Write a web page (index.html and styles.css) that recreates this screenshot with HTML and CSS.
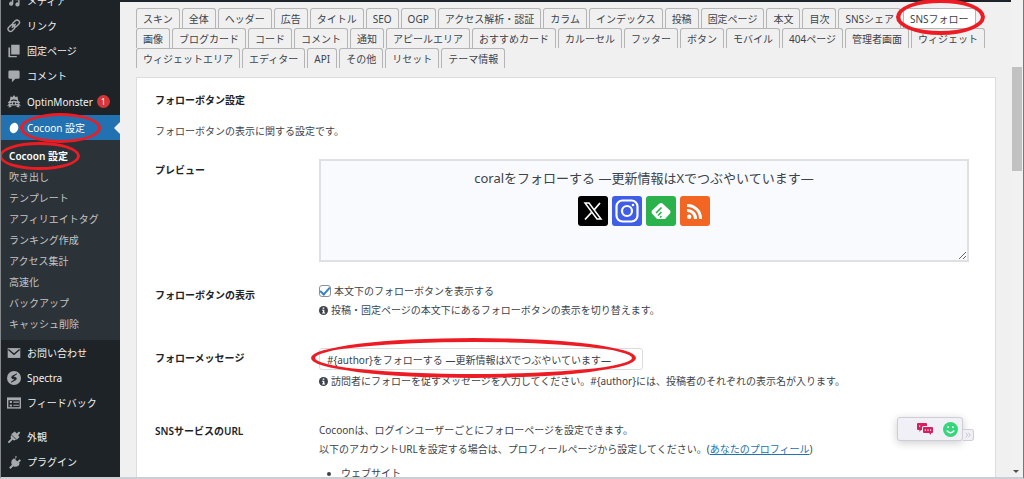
FILE: index.html
```html
<!DOCTYPE html>
<html lang="ja">
<head>
<meta charset="utf-8">
<meta name="viewport" content="width=device-width, initial-scale=1">
<title>Cocoon 設定</title>
<link rel="stylesheet" href="styles.css">
</head>
<body>
<div class="app">
  <nav class="sidebar" aria-label="メインメニュー">
    <ul class="menu">
      <li><a class="item item-first" href="#"><svg class="icon" viewBox="0 0 20 20"><path d="M4 3h5v11a3 3 0 1 1-2-3V6H4zM12 6h6v9a3 3 0 1 1-2-3V9h-4z"/></svg>メディア</a></li>
      <li><a class="item" href="#"><svg class="icon line" viewBox="0 0 20 20"><g transform="rotate(-45 10 10)"><rect x="0" y="6" width="11" height="7" rx="3.5"/><rect x="9" y="6" width="11" height="7" rx="3.5"/><path d="M6 9.5h8"/></g></svg>リンク</a></li>
      <li><a class="item" href="#"><svg class="icon" viewBox="0 0 20 20"><path d="M6 1h12v14H6zM2 5h2.500v12H14v2H2z"/></svg>固定ページ</a></li>
      <li><a class="item" href="#"><svg class="icon" viewBox="0 0 20 20"><path d="M4 2h12a2 2 0 0 1 2 2v8a2 2 0 0 1-2 2h-4l-5 5v-5H4a2 2 0 0 1-2-2V4a2 2 0 0 1 2-2z"/></svg>コメント</a></li>
      <li><a class="item item-count" href="#"><svg class="icon" viewBox="0 0 20 20"><path d="m10 0 2 3 3-1 1 6 3 3-2 1 3 4-3-1 1 3-4-1H6l-4 1 1-3-3 1 3-4-2-1 3-3 1-6 3 1z"/><path fill="#1d2327" d="M5 8c3-2 7-2 10 0l-1 1c-2-1-6-1-8 0zM3 12l4-1v2zM17 12l-4-1v2zM5 15h10l-2 2H7z"/><circle cx="10" cy="12" r="1.500" fill="#1d2327"/></svg>OptinMonster<span class="count">1</span></a></li>
      <li><a class="item current" href="#"><svg class="icon" viewBox="0 0 20 20"><ellipse cx="10" cy="10" rx="6" ry="7.500" transform="rotate(20 10 10)"/></svg><span class="marked">Cocoon 設定<i class="ring ring-menu"></i></span></a>
        <ul class="submenu">
          <li><a class="selected marked" href="#">Cocoon 設定<i class="ring ring-sub"></i></a></li>
          <li><a href="#">吹き出し</a></li>
          <li><a href="#">テンプレート</a></li>
          <li><a href="#">アフィリエイトタグ</a></li>
          <li><a href="#">ランキング作成</a></li>
          <li><a href="#">アクセス集計</a></li>
          <li><a href="#">高速化</a></li>
          <li><a href="#">バックアップ</a></li>
          <li><a href="#">キャッシュ削除</a></li>
        </ul></li>
      <li><a class="item" href="#"><svg class="icon" viewBox="0 0 20 20"><path d="M1 3h18v14H1z"/><path d="m2 5 8 7 8-7" fill="none" stroke="#1d2327" stroke-width="2"/></svg>お問い合わせ</a></li>
      <li><a class="item" href="#"><svg class="icon" viewBox="0 0 20 20"><circle cx="10" cy="10" r="10"/><path d="M14 4 8 7c-3 2-1 4 1 4l2 1-5 4 6-3c3-2 1-4-1-4L9 8z" fill="#1d2327" stroke="#1d2327"/></svg>Spectra</a></li>
      <li><a class="item" href="#"><svg class="icon" viewBox="0 0 20 20"><path d="M0 2h20v16H0z"/><path fill="#1d2327" d="M2 6h16v10H2z"/><path d="M4 7h3v3H4zM4 12h3v3H4zM9 8h8v1.500H9zM9 12.500h8V14H9z"/></svg>フィードバック</a></li>
      <li class="apart"><a class="item" href="#"><svg class="icon" viewBox="0 0 20 20"><path d="m11 2 3 3 3-3 2 2-3 4 2 2-4 4-8-8zM6 7l7 7-3 1-2-1-5 5-2-2 5-5-1-2z"/></svg>外観</a></li>
      <li><a class="item" href="#"><svg class="icon" viewBox="0 0 20 20"><path d="m12 1 2 1-2 5 3 2 3-3 2 2-3 3 1 1c-1 4-5 6-9 4l-4 4-2-2 4-4c-2-4 0-8 3-9l2 1z"/></svg>プラグイン</a></li>
    </ul>
  </nav>

  <main class="content">
    <div class="tabs">
      <button class="tab">スキン</button><button class="tab">全体</button><button class="tab">ヘッダー</button><button class="tab">広告</button><button class="tab">タイトル</button><button class="tab">SEO</button><button class="tab">OGP</button><button class="tab">アクセス解析・認証</button><button class="tab">カラム</button><button class="tab">インデックス</button><button class="tab">投稿</button><button class="tab">固定ページ</button><button class="tab">本文</button><button class="tab">目次</button><button class="tab">SNSシェア</button><button class="tab active marked">SNSフォロー<i class="ring ring-tab"></i></button>
      <button class="tab">画像</button><button class="tab">ブログカード</button><button class="tab">コード</button><button class="tab">コメント</button><button class="tab">通知</button><button class="tab">アピールエリア</button><button class="tab">おすすめカード</button><button class="tab">カルーセル</button><button class="tab">フッター</button><button class="tab">ボタン</button><button class="tab">モバイル</button><button class="tab">404ページ</button><button class="tab">管理者画面</button><button class="tab">ウィジェット</button>
      <button class="tab">ウィジェットエリア</button><button class="tab">エディター</button><button class="tab">API</button><button class="tab">その他</button><button class="tab">リセット</button><button class="tab">テーマ情報</button>
    </div>

    <section class="panel">
      <h2>フォローボタン設定</h2>
      <p class="lead">フォローボタンの表示に関する設定です。</p>

      <div class="row row-preview">
        <h3>プレビュー</h3>
        <div class="preview">
          <p class="message">coralをフォローする —更新情報はXでつぶやいています—</p>
          <div class="socials">
            <a class="social x" href="#" aria-label="X"><svg viewBox="0 0 30 30"><path d="M7 7h4l12 16h-4z" fill="none" stroke="#fff" stroke-width="1.500"/><path d="m22 7-6 7M13.500 16.500 7 23.500" stroke="#fff" stroke-width="1.800"/></svg></a>
            <a class="social instagram" href="#" aria-label="Instagram"><svg viewBox="0 0 30 30" fill="none" stroke="#fff" stroke-width="2.200"><rect x="4.500" y="4.500" width="21" height="21" rx="6"/><circle cx="15" cy="15" r="5"/><circle cx="21" cy="9" r="1.300" fill="#fff" stroke="none"/></svg></a>
            <a class="social feedly" href="#" aria-label="feedly"><svg viewBox="0 0 30 30"><path d="M13.500 7.500q1.500-1 3 0l7.500 7q1 1.500 0 3L19 23h-8l-5-5.500q-1-1.500 0-3z" fill="#fff"/><path d="m10 17 5.500-5.500M12 19.500l3.500-3.500M14 21.500l1.500-1.500" stroke="#2bb24c" stroke-width="1.600"/></svg></a>
            <a class="social rss" href="#" aria-label="RSS"><svg viewBox="0 0 30 30" fill="none" stroke="#fff" stroke-width="3"><path d="M7 9.500A13 13 0 0 1 20.500 23M7 14.500A8 8 0 0 1 15.500 23"/><circle cx="9.200" cy="20.800" r="2.200" fill="#fff" stroke="none"/></svg></a>
          </div>
        </div>
      </div>

      <div class="row row-display">
        <h3>フォローボタンの表示</h3>
        <div>
          <label class="check"><input type="checkbox" checked>本文下のフォローボタンを表示する</label>
          <p class="tip"><svg class="info" viewBox="0 0 16 16"><circle cx="8" cy="8" r="8"/><path d="M6.500 2.500h3v2.500h-3zM5.500 6.500h4v5H11v2H5.500v-2H7v-3H5.500z" fill="#fff"/></svg>投稿・固定ページの本文下にあるフォローボタンの表示を切り替えます。</p>
        </div>
      </div>

      <div class="row row-message">
        <h3><label for="follow-message">フォローメッセージ</label></h3>
        <div>
          <div class="field marked"><input id="follow-message" type="text" value="#{author}をフォローする —更新情報はXでつぶやいています—"><i class="ring ring-field"></i></div>
          <p class="tip"><svg class="info" viewBox="0 0 16 16"><circle cx="8" cy="8" r="8"/><path d="M6.500 2.500h3v2.500h-3zM5.500 6.500h4v5H11v2H5.500v-2H7v-3H5.500z" fill="#fff"/></svg>訪問者にフォローを促すメッセージを入力してください。#{author}には、投稿者のそれぞれの表示名が入ります。</p>
        </div>
      </div>

      <div class="row row-urls">
        <h3>SNSサービスのURL</h3>
        <div class="prose">
          <p>Cocoonは、ログインユーザーごとにフォローページを設定できます。</p>
          <p>以下のアカウントURLを設定する場合は、プロフィールページから設定してください。(<a href="#">あなたのプロフィール</a>)</p>
          <ul><li>ウェブサイト</li></ul>
        </div>
      </div>
    </section>
  </main>

  <div class="scrollbar"><div class="thumb"></div><span class="down"></span></div>

  <div class="widget">
    <div class="widget-body"><span class="grip"></span>
      <svg class="chat" viewBox="0 0 16 12" fill="#d81f5e"><path d="M1 0h8a1 1 0 0 1 1 1v2H6.500a1.500 1.500 0 0 0-1.500 1.500V7H4L2.500 9V7H1a1 1 0 0 1-1-1V1a1 1 0 0 1 1-1z"/><path d="M7 4h8a1 1 0 0 1 1 1v4a1 1 0 0 1-1 1h-1v2l-2-2H7a1 1 0 0 1-1-1V5a1 1 0 0 1 1-1z"/><path d="M7.800 6.500H9v1.200H7.800zM10.400 6.500h1.200v1.200h-1.200zM13 6.500h1.200v1.200H13zM2 2.500h1.200v1.200H2z" fill="#fff"/></svg>
      <svg class="smile" viewBox="0 0 16 16"><circle cx="8" cy="8" r="8" fill="#34d67b"/><path d="M5.500 4.500v2M10.500 4.500v2M4 9q4 5 8 0" fill="none" stroke="#fff" stroke-width="1.600"/></svg>
    </div>
    <div class="widget-tab"><svg viewBox="0 0 8 8"><path d="m1 1 2.500 3L1 7M4.500 1 7 4 4.500 7" fill="none" stroke="#b8bac2"/></svg></div>
  </div>
</div>
</body>
</html>
```
FILE: styles.css
```css
* { box-sizing: border-box; }
body, h2, h3, p, ul { margin: 0; padding: 0; }
ul { list-style: none; }
a { color: inherit; text-decoration: none; }
button, input { font: inherit; color: inherit; }

body {
  background: #f0f0f0;
  color: #3c434a;
  font: 10px/20px "Noto Sans", "Noto Sans CJK JP", sans-serif;
}

.app {
  position: relative;
  display: flex;
  height: 100vh;
  overflow: hidden;
  border-left: 1px solid #85888a;
  border-right: 1px solid #777;
  border-bottom: 2px solid #cbced2;
}
.app::before {
  content: "";
  position: absolute;
  inset: 0 12px auto 119px;
  height: 2px;
  background: #1d2327;
}

.marked { position: relative; }
.ring {
  position: absolute;
  z-index: 5;
  border: 3px solid #ed1c24;
  border-radius: 50%;
  pointer-events: none;
}
.ring-menu { inset: -5px -16px -5px -7px; }
.ring-sub { inset: -4px -12px -4px -10px; }
.ring-tab { inset: -10px -10px -7px -8px; border-width: 4px; }
.ring-field { inset: -10px 7px -8px -8px; border-width: 4px; }

.sidebar {
  flex: 0 0 119px;
  background: #1d2327;
  color: #f0f0f1;
}
.item {
  position: relative;
  display: flex;
  align-items: center;
  gap: 6px;
  height: 25px;
  padding-left: 6px;
  white-space: nowrap;
}
.item-first { margin-top: -12px; }
.item-count { height: 27px; }
.icon { width: 14px; height: 14px; fill: #a7aaad; flex: none; }
.icon.line { fill: none; stroke: #a7aaad; stroke-width: 2; }
.count {
  width: 13px;
  height: 13px;
  margin-left: -2px;
  border-radius: 50%;
  background: #d63638;
  color: #fff;
  font-size: 8px;
  line-height: 13px;
  text-align: center;
}
.current { background: #2271b1; color: #fff; }
.current .icon { fill: #fff; }
.current::after {
  content: "";
  position: absolute;
  right: 0;
  border: 6px solid transparent;
  border-right-color: #f0f0f0;
  border-left: 0;
}
.submenu { padding: 6px 0 5px 8px; background: #2c3338; color: #c3c4c7; }
.submenu li { height: 21px; }
.submenu .selected { color: #fff; font-weight: 600; display: inline-block; }
.apart { margin-top: 9px; }

.content { flex: 1; min-width: 0; padding: 8px 15px 0 16px; }
.tabs { display: flex; flex-wrap: wrap; column-gap: 2px; }
.tab {
  height: 20px;
  padding: 0 6px;
  border: 1px solid #b5b5b5;
  border-bottom: 0;
  border-radius: 3px 3px 0 0;
  background: #f0f0f0;
  line-height: 20px;
  white-space: nowrap;
}
.tab.active { background: #fff; }

.panel {
  margin-top: 9px;
  padding: 12px 26px 0 18px;
  border: 1px solid #ddd;
  background: #fff;
  height: 100%;
}
h2, h3 { color: #1d2327; font-size: 10px; font-weight: 600; line-height: 20px; }
.lead { margin: 11px 0 18px; }
.row { display: grid; grid-template-columns: 164px minmax(0, 1fr); }
.preview {
  height: 103px;
  padding-top: 5px;
  border: 2px solid #dfe0e1;
  background: #f9fafd;
  overflow: auto;
  resize: both;
  text-align: center;
}
.message { font-size: 13px; line-height: 24px; }
.socials { display: flex; justify-content: center; gap: 4px; margin-top: 6px; }
.social { width: 30px; height: 30px; border-radius: 3px; }
.social svg { display: block; }
.x { background: #000; }
.instagram { background: #405de6; }
.feedly { background: #2bb24c; }
.rss { background: #f26522; }

.row-display { margin-top: 19px; }
.row-message { margin-top: 29px; }
.row-urls { margin-top: 31px; }
.row-preview h3 { padding-top: 1px; }
.row-display h3 { padding-top: 4px; }
.check { display: flex; align-items: center; gap: 3px; }
.check input {
  appearance: none;
  width: 12px;
  height: 12px;
  margin: 0;
  border: 1px solid #8c8f94;
  border-radius: 3px;
  background: #fff;
  display: grid;
  place-items: center;
}
.check input:checked::before {
  content: "";
  width: 8px;
  height: 4px;
  border: solid #3582c4;
  border-width: 0 0 2px 2px;
  transform: translateY(-1px) rotate(-48deg);
}
.tip { display: flex; align-items: center; gap: 3px; line-height: 18px; white-space: nowrap; }
.info { width: 9px; height: 9px; fill: #3c434a; flex: none; }
.field { width: 324px; margin-bottom: 2px; }
.field input {
  display: block;
  width: 100%;
  height: 22px;
  padding: 0 7px;
  border: 1px solid #dcdcde;
  border-radius: 3px;
  background: #fff;
}
.prose { line-height: 19px; }
.prose a { color: #2271b1; text-decoration: underline; }
.prose ul { margin: 5px 0 0 22px; list-style: disc; }

.scrollbar { position: relative; flex: 0 0 12px; padding-top: 67px; background: #f1f1f1; }
.thumb { width: 10px; height: 104px; margin: 0 auto; background: #c1c1c1; }
.down {
  position: absolute;
  right: 4px;
  bottom: 4px;
  border: 3px solid transparent;
  border-top-color: #505050;
  border-bottom: 0;
}

.widget { position: absolute; right: 49px; bottom: 36px; display: flex; align-items: flex-end; }
.widget-body {
  display: flex;
  align-items: center;
  width: 66px;
  height: 24px;
  padding: 0 4px 0 5px;
  border: 1px solid #cdced6;
  border-radius: 3px;
  background: #f0f0f6;
  box-shadow: 0 2px 8px #0003;
}
.grip { width: 1px; height: 11px; background: #b0b1b9; }
.chat { width: 16px; height: 12px; margin: 0 10px 0 14px; flex: none; }
.smile { width: 15px; height: 15px; flex: none; }
.widget-tab {
  display: grid;
  place-items: center;
  width: 11px;
  height: 12px;
  border: 1px solid #cdced6;
  border-left: 0;
  border-radius: 0 3px 3px 0;
  background: #f0f0f6;
}
.widget-tab svg { width: 6px; height: 6px; }
```
